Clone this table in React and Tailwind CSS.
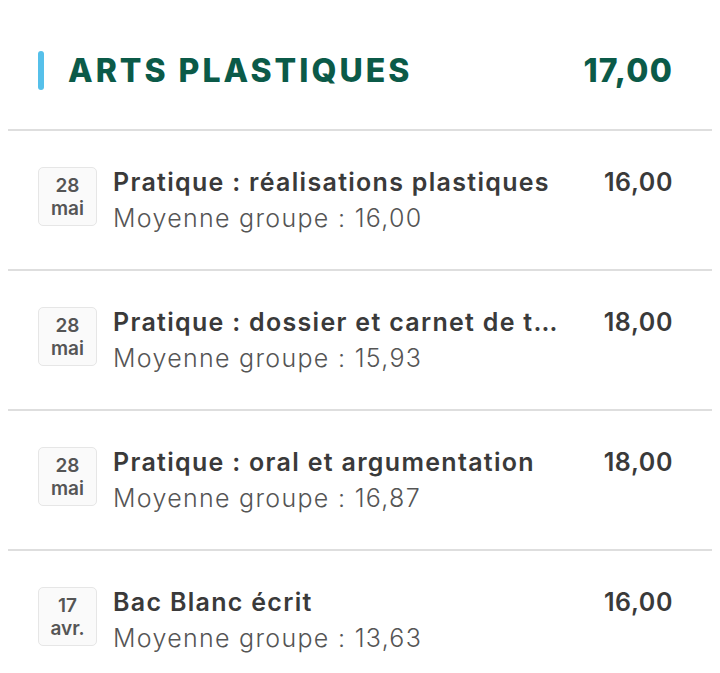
const rows = [
  { day: "28", month: "mai", title: "Pratique : réalisations plastiques", avg: "16,00", grade: "16,00" },
  { day: "28", month: "mai", title: "Pratique : dossier et carnet de travail", avg: "15,93", grade: "18,00" },
  { day: "28", month: "mai", title: "Pratique : oral et argumentation", avg: "16,87", grade: "18,00" },
  { day: "17", month: "avr.", title: "Bac Blanc écrit", avg: "13,63", grade: "16,00" },
];

const font = { fontFamily: "Inter, 'Noto Sans', sans-serif" };

const Row = ({ day, month, title, avg, grade, last }) => {
  return (
    <div>
      <div className="h-[138px] flex items-start pl-[38px] pr-[47px] pt-[36px]">
        <div className="w-[59px] h-[59px] shrink-0 rounded-[5px] border border-[#e6e6e6] bg-[#fafafa] flex flex-col items-center justify-center text-[#555] font-semibold text-[19px] leading-[23px]">
          <span>{day}</span>
          <span>{month}</span>
        </div>
        <div className="flex-1 min-w-0 ml-[16px] pr-[36px]">
          <p className="truncate text-[25px] leading-[30px] font-semibold tracking-[1.3px] text-[#3a3a3a]">{title}</p>
          <p className="mt-[4px] text-[25px] leading-[34px] font-light tracking-[1.3px] text-[#555]">Moyenne groupe : {avg}</p>
        </div>
        <p className="text-[25px] leading-[30px] font-semibold tracking-[0.6px] text-[#3a3a3a]">{grade}</p>
      </div>
      {!last && <div className="mx-[8px] h-[2px] bg-[#dedede]" />}
    </div>
  );
};

const App = () => {
  return (
    <div className="w-[720px] h-[673px] bg-white overflow-hidden" style={font}>
      <div className="h-[129px] pt-[51px] pl-[38px] pr-[47px]">
        <div className="h-[39px] flex items-center">
          <div className="w-[6px] h-[39px] rounded-full bg-[#56c0ea]" />
          <h1 className="ml-[24px] flex-1 text-[32px] font-extrabold tracking-[3px] text-[#0b5a48] leading-none">ARTS PLASTIQUES</h1>
          <span className="text-[32px] font-extrabold tracking-[1.2px] text-[#0b5a48] leading-none">17,00</span>
        </div>
      </div>
      <div className="mx-[8px] h-[2px] bg-[#dedede]" />
      {rows.map((r, i) => (
        <Row key={i} {...r} last={i === rows.length - 1} />
      ))}
    </div>
  );
};

export default App;
